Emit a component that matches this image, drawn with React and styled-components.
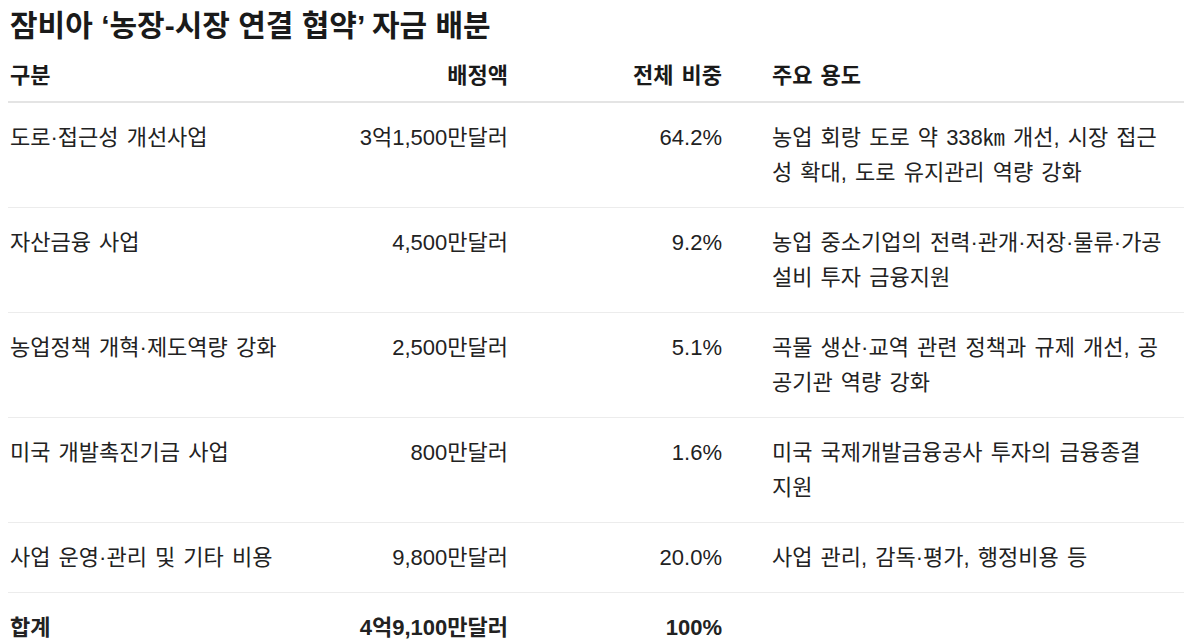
import React from 'react';
import styled, { createGlobalStyle } from 'styled-components';

const GlobalStyle = createGlobalStyle`
  body {
    margin: 0;
    padding: 8px;
    background: #ffffff;
    color: #1f1f1f;
    font-family: "Liberation Sans", "Noto Sans CJK KR", sans-serif;
  }
`;

const Title = styled.h2`
  margin: 0;
  padding-left: 2px;
  font-size: 30px;
  line-height: 36px;
  font-weight: 700;
  color: #1a1a1a;
`;

const Table = styled.table`
  width: 1176px;
  border-collapse: collapse;
  table-layout: fixed;
  font-size: 22px;
  line-height: 35px;
  word-spacing: 2px;
`;

const Col = styled.col`
  width: ${(p) => p.$w}px;
`;

const HeadCell = styled.th`
  padding: 14px ${(p) => p.$pr}px 8px ${(p) => p.$pl}px;
  text-align: ${(p) => p.$align};
  font-weight: 700;
  color: #1a1a1a;
  border-bottom: 2px solid #e4e4e4;
`;

const Row = styled.tr`
  border-bottom: ${(p) => (p.$last ? 'none' : '1px solid #ececec')};
  font-weight: ${(p) => (p.$total ? 700 : 400)};
`;

const Cell = styled.td`
  padding: 17px ${(p) => p.$pr}px 17px ${(p) => p.$pl}px;
  text-align: ${(p) => p.$align};
  vertical-align: top;
  color: #222;
`;

const cols = [
  { w: 300, pl: 2, pr: 0, align: 'left' },
  { w: 212, pl: 0, pr: 12, align: 'right' },
  { w: 214, pl: 0, pr: 12, align: 'right' },
  { w: 450, pl: 38, pr: 21, align: 'left' },
];

const heads = ['구분', '배정액', '전체 비중', '주요 용도'];

const rows = [
  ['도로·접근성 개선사업', '3억1,500만달러', '64.2%', '농업 회랑 도로 약 338㎞ 개선, 시장 접근성 확대, 도로 유지관리 역량 강화'],
  ['자산금융 사업', '4,500만달러', '9.2%', '농업 중소기업의 전력·관개·저장·물류·가공 설비 투자 금융지원'],
  ['농업정책 개혁·제도역량 강화', '2,500만달러', '5.1%', '곡물 생산·교역 관련 정책과 규제 개선, 공공기관 역량 강화'],
  ['미국 개발촉진기금 사업', '800만달러', '1.6%', '미국 국제개발금융공사 투자의 금융종결 지원'],
  ['사업 운영·관리 및 기타 비용', '9,800만달러', '20.0%', '사업 관리, 감독·평가, 행정비용 등'],
];

const total = ['합계', '4억9,100만달러', '100%', ''];

export default function App() {
  return (
    <>
      <GlobalStyle />
      <Title>잠비아 ‘농장-시장 연결 협약’ 자금 배분</Title>
      <Table>
        <colgroup>
          {cols.map((c, i) => (
            <Col key={i} $w={c.w} />
          ))}
        </colgroup>
        <thead>
          <tr>
            {heads.map((h, i) => (
              <HeadCell key={h} $pl={cols[i].pl} $pr={cols[i].pr} $align={cols[i].align}>
                {h}
              </HeadCell>
            ))}
          </tr>
        </thead>
        <tbody>
          {rows.map((r) => (
            <Row key={r[0]}>
              {r.map((v, i) => (
                <Cell key={i} $pl={cols[i].pl} $pr={cols[i].pr} $align={cols[i].align}>
                  {v}
                </Cell>
              ))}
            </Row>
          ))}
          <Row $total $last>
            {total.map((v, i) => (
              <Cell key={i} $pl={cols[i].pl} $pr={cols[i].pr} $align={cols[i].align}>
                {v}
              </Cell>
            ))}
          </Row>
        </tbody>
      </Table>
    </>
  );
}
